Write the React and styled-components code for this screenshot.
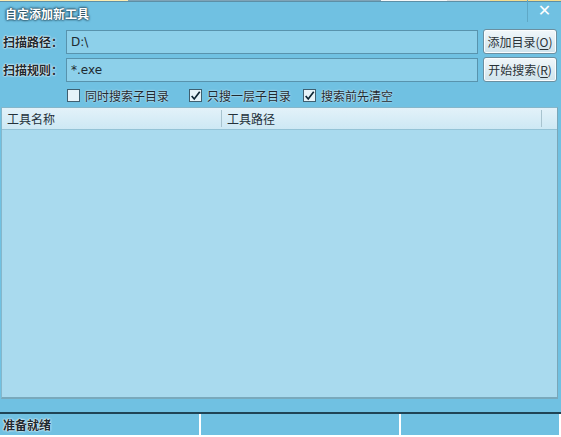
import styled, { createGlobalStyle } from "styled-components";

const Global = createGlobalStyle`
  html, body {
    margin: 0;
    padding: 0;
    background: #70c1e2;
  }
  * { box-sizing: border-box; }
`;

const FONT = `"Noto Sans CJK SC", "Noto Sans", sans-serif`;

const Window = styled.div`
  width: 561px;
  height: 437px;
  display: flex;
  flex-direction: column;
  background: #70c1e2;
  font-family: ${FONT};
  font-size: 12px;
  color: #1f2a30;
  overflow: hidden;
`;

const TopStrip = styled.div`
  display: flex;
  height: 2px;
  border-bottom: 1px solid #5d8fa6;
`;

const StripPart = styled.div`
  width: ${({ $w }) => $w}px;
  flex: ${({ $grow }) => ($grow ? 1 : "none")};
  background: ${({ $c }) => $c};
`;

const TitleBar = styled.div`
  height: 22px;
  display: flex;
  align-items: center;
  justify-content: space-between;
  padding-left: 5px;
`;

const Title = styled.span`
  color: #fff;
  font-weight: bold;
  text-shadow: 0 0 2px #24495a, 0 0 2px #24495a, 0 0 3px #24495a;
`;

const Close = styled.div`
  width: 34px;
  height: 22px;
  display: flex;
  align-items: center;
  justify-content: center;
  border-left: 1px solid #5fa8c6;
  color: #fff;
  font-size: 16px;
  font-weight: bold;
  font-family: "DejaVu Sans", sans-serif;
  line-height: 1;
  margin-top: -4px;
`;

const Form = styled.div`
  display: flex;
  flex-direction: column;
  gap: 3px;
  padding: 5px 4px 0 3px;
`;

const Row = styled.div`
  display: flex;
  align-items: center;
  gap: 5px;
`;

const Label = styled.span`
  width: 58px;
  font-weight: bold;
  white-space: nowrap;
  text-shadow: 0 0 2px #fff, 0 0 2px #fff;
`;

const Input = styled.div`
  flex: 1;
  height: 24px;
  display: flex;
  align-items: center;
  padding-left: 4px;
  background: #8dd0ea;
  border: 1px solid #5893ad;
  font-family: "DejaVu Sans", ${FONT};
  font-size: 12px;
  color: #1e2a30;
`;

const Button = styled.div`
  width: 74px;
  height: 25px;
  display: flex;
  align-items: center;
  justify-content: center;
  border: 1px solid #6b8fa0;
  border-radius: 3px;
  background: linear-gradient(#f1f7fa, #cfe3ec);
  box-shadow: inset 0 0 0 1px #fbfdfe;
  color: #2a3237;
  font-size: 12px;
  white-space: nowrap;
`;

const Key = styled.span`
  text-decoration: underline;
  text-underline-offset: 2px;
`;

const Options = styled.div`
  display: flex;
  align-items: center;
  padding: 5px 0 0 67px;
  height: 22px;
`;

const Option = styled.label`
  display: flex;
  align-items: center;
  gap: 5px;
  margin-right: ${({ $gap }) => $gap}px;
  text-shadow: 0 0 2px #fff;
  white-space: nowrap;
`;

const Box = styled.span`
  width: 13px;
  height: 13px;
  display: flex;
  align-items: center;
  justify-content: center;
  background: #e6f3f9;
  border: 1px solid #3f5f70;
`;

const List = styled.div`
  margin: 3px 3px 0 1px;
  height: 292px;
  display: flex;
  flex-direction: column;
  background: #a9daee;
  border: 1px solid #85b7cb;
  border-right-color: #7aa6b8;
  border-bottom: 2px solid #79a9bc;
`;

const Header = styled.div`
  height: 22px;
  display: flex;
  background: linear-gradient(#e3f2f9, #cde8f4);
  border-bottom: 1px solid #94c3d6;
`;

const Col = styled.div`
  width: ${({ $w }) => $w}px;
  flex: ${({ $grow }) => ($grow ? 1 : "none")};
  display: flex;
  align-items: center;
  padding-left: 5px;
  border-right: ${({ $sep }) => ($sep ? "1px solid #a8c3cf" : "none")};
  margin: 2px 0;
  color: #24313a;
`;

const Status = styled.div`
  margin-top: 13px;
  flex: 1;
  display: flex;
  border-top: 2px solid #1f4455;
  padding-bottom: 2px;
  background: #fff;
`;

const Pane = styled.div`
  width: ${({ $w }) => $w}px;
  flex: ${({ $grow }) => ($grow ? 1 : "none")};
  display: flex;
  align-items: center;
  padding-left: 3px;
  margin-right: 2px;
  background: #70c1e2;
  font-weight: bold;
  text-shadow: 0 0 2px #fff, 0 0 2px #fff;
`;

const Tick = () => (
  <svg width="13" height="12" viewBox="0 0 13 12">
    <path d="M2 6 L5 9.5 L11.5 1" fill="none" stroke="#0d2533" strokeWidth="2" />
  </svg>
);

const strip = [
  { w: 128, c: "#fbecb2" },
  { w: 253, c: "#7fa3b6" },
  { w: 66, c: "#f6f8f9" },
  { w: 43, c: "#d8dde0" },
  { grow: true, c: "#f3dc8e" },
];

const App = () => {
  return (
    <>
      <Global />
      <Window>
        <TopStrip>
          {strip.map((s, i) => (
            <StripPart key={i} $w={s.w} $grow={s.grow} $c={s.c} />
          ))}
        </TopStrip>
        <TitleBar>
          <Title>自定添加新工具</Title>
          <Close>✕</Close>
        </TitleBar>
        <Form>
          <Row>
            <Label>扫描路径：</Label>
            <Input>D:\</Input>
            <Button>
              添加目录(<Key>O</Key>)
            </Button>
          </Row>
          <Row>
            <Label>扫描规则：</Label>
            <Input>*.exe</Input>
            <Button>
              开始搜索(<Key>R</Key>)
            </Button>
          </Row>
        </Form>
        <Options>
          <Option $gap={20}>
            <Box />
            同时搜索子目录
          </Option>
          <Option $gap={12}>
            <Box>
              <Tick />
            </Box>
            只搜一层子目录
          </Option>
          <Option $gap={0}>
            <Box>
              <Tick />
            </Box>
            搜索前先清空
          </Option>
        </Options>
        <List>
          <Header>
            <Col $w={220} $sep>工具名称</Col>
            <Col $w={320} $sep>工具路径</Col>
            <Col $grow />
          </Header>
        </List>
        <Status>
          <Pane $w={199}>准备就绪</Pane>
          <Pane $w={198} />
          <Pane $grow />
        </Status>
      </Window>
    </>
  );
};

export default App;
